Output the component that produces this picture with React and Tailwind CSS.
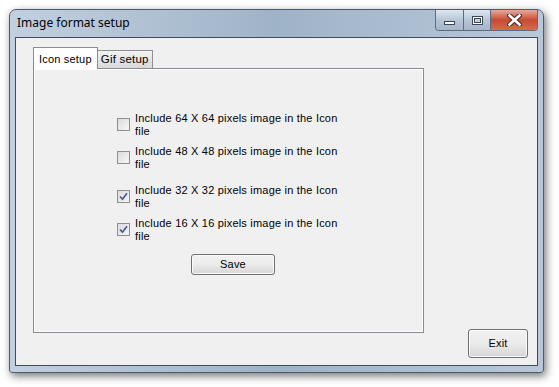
import { useState } from "react";

const rows = [
  { size: "64 X 64", checked: false, gap: "mt-0" },
  { size: "48 X 48", checked: false, gap: "mt-[8px]" },
  { size: "32 X 32", checked: true, gap: "mt-[14px]" },
  { size: "16 X 16", checked: true, gap: "mt-[8px]" },
];

const CheckBox = ({ checked, onClick }) => (
  <button
    onClick={onClick}
    className="mt-[6px] w-[13px] h-[13px] shrink-0 border border-[#8f8f8f] bg-gradient-to-br from-[#dcdcdc] to-[#f6f6f6] flex items-center justify-center p-0"
  >
    {checked && (
      <svg width="9" height="9" viewBox="0 0 9 9">
        <path
          d="M1 4.5 L3.5 7.2 L8 1.2"
          fill="none"
          stroke="#4a5f97"
          strokeWidth="1.8"
        />
      </svg>
    )}
  </button>
);

const WinButton = ({ className, children }) => (
  <div
    className={`h-[20px] flex items-center justify-center border-r border-[#5a6d82] ${className}`}
  >
    {children}
  </div>
);

const App = () => {
  const [checks, setChecks] = useState(rows.map((r) => r.checked));
  const [tab, setTab] = useState(0);

  return (
    <div className="w-[559px] h-[387px] bg-white pt-[9px] pl-[9px] font-['Liberation_Sans',Arial,sans-serif]">
      <div className="w-[535px] h-[364px] rounded-t-[7px] rounded-b-[3px] border border-[#4c5c70] bg-gradient-to-r from-[#c2d0df] via-[#9fb3c8] to-[#b8c8d9] shadow-[2px_3px_9px_rgba(0,0,0,0.55)] flex flex-col px-[5px] pb-[6px]">
        <div className="h-[27px] flex items-start">
          <div className="pt-[7px] pl-[2px] text-[12px] text-black font-['Noto_Sans',sans-serif] leading-none">
            Image format setup
          </div>
          <div className="ml-auto flex rounded-b-[4px] border border-t-0 border-[#5a6d82] overflow-hidden">
            <WinButton className="w-[28px] bg-gradient-to-b from-[#dfe7f0] via-[#b7c6d6] to-[#a5b6c9]">
              <div className="w-[11px] h-[4px] bg-white border border-[#3b4656] mt-[5px]" />
            </WinButton>
            <WinButton className="w-[27px] bg-gradient-to-b from-[#dfe7f0] via-[#b7c6d6] to-[#a5b6c9]">
              <div className="w-[11px] h-[9px] border border-[#3b4656] bg-white flex items-center justify-center">
                <div className="w-[7px] h-[5px] border border-[#3b4656] bg-[#c5d1de]" />
              </div>
            </WinButton>
            <div className="w-[46px] h-[20px] flex items-center justify-center bg-gradient-to-b from-[#e9a899] via-[#c74a33] to-[#d66a4f]">
              <svg width="15" height="12" viewBox="0 0 15 12">
                <path
                  d="M2.5 1.5 L12.5 10.5 M12.5 1.5 L2.5 10.5"
                  stroke="#3b2a28"
                  strokeWidth="4.6"
                  strokeLinecap="square"
                />
                <path
                  d="M2.5 1.5 L12.5 10.5 M12.5 1.5 L2.5 10.5"
                  stroke="#ffffff"
                  strokeWidth="2.6"
                  strokeLinecap="square"
                />
              </svg>
            </div>
          </div>
        </div>

        <div className="flex-1 border border-[#3f4c5c] bg-[#f0f0f0] flex pl-[17px] pr-[9px] pt-[9px] pb-[7px] text-[11px] tracking-[0.2px] text-black">
          <div className="flex flex-col">
            <div className="flex items-end h-[21px]">
              <button
                onClick={() => setTab(0)}
                className={`px-[5px] text-[11px] relative z-10 ${
                  tab === 0
                    ? "h-[22px] bg-white border border-b-0 border-[#898c95] -mb-px pt-[2px] self-start"
                    : "h-[18px] bg-gradient-to-b from-[#f2f2f2] to-[#d9d9d9] border border-b-0 border-[#8f8f8f]"
                }`}
              >
                Icon setup
              </button>
              <button
                onClick={() => setTab(1)}
                className={`px-[3px] text-[11.5px] relative -ml-px ${
                  tab === 1
                    ? "h-[22px] z-10 bg-white border border-b-0 border-[#898c95] -mb-px"
                    : "h-[18px] bg-gradient-to-b from-[#f2f2f2] to-[#d9d9d9] border border-b-0 border-[#8f8f8f]"
                }`}
              >
                Gif setup
              </button>
            </div>
            <div className="w-[391px] h-[265px] border border-[#898c95] bg-[#f0f0f0] shadow-[inset_1px_1px_0_#ffffff,inset_-1px_-1px_0_#ffffff] pl-[83px] pt-[43px]">
              {tab === 0 && (
                <>
                  {rows.map((r, i) => (
                    <div key={r.size} className={`flex gap-[5px] ${r.gap}`}>
                      <CheckBox
                        checked={checks[i]}
                        onClick={() =>
                          setChecks(checks.map((c, j) => (j === i ? !c : c)))
                        }
                      />
                      <div className="leading-[12.5px]">
                        <div>Include {r.size} pixels image in the Icon</div>
                        <div>file</div>
                      </div>
                    </div>
                  ))}
                  <button className="mt-[12px] ml-[74px] w-[84px] h-[21px] rounded-[3px] border border-[#707070] bg-gradient-to-b from-[#f2f2f2] via-[#ebebeb] to-[#d6d6d6] text-[11px] shadow-[inset_0_0_0_1px_#fbfbfb]">
                    Save
                  </button>
                </>
              )}
            </div>
          </div>
          <div className="ml-auto self-end">
            <button className="w-[60px] h-[29px] rounded-[3px] border border-[#707070] bg-gradient-to-b from-[#f2f2f2] via-[#ebebeb] to-[#d6d6d6] text-[11px] shadow-[inset_0_0_0_1px_#fbfbfb]">
              Exit
            </button>
          </div>
        </div>
      </div>
    </div>
  );
};

export default App;
